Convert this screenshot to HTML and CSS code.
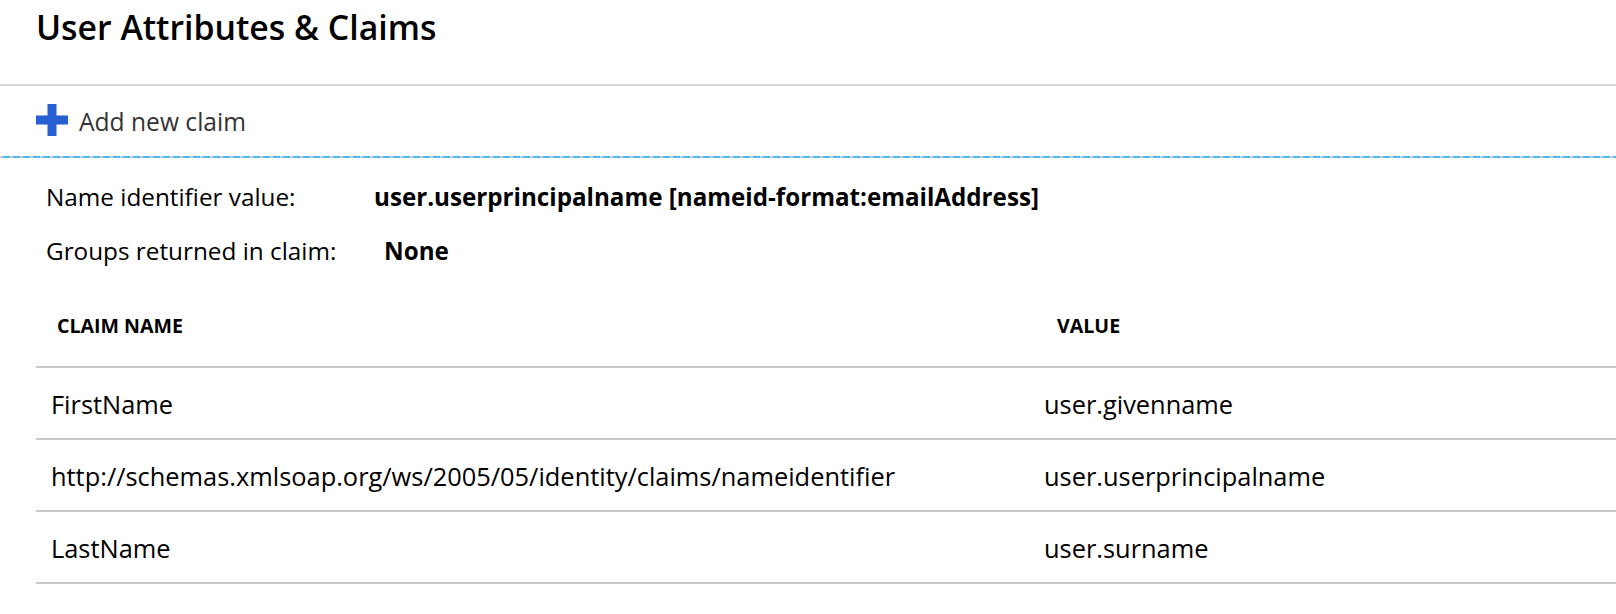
FILE: index.html
```html
<!DOCTYPE html>
<html lang="en">
<head>
<meta charset="utf-8">
<title>User Attributes &amp; Claims</title>
<link rel="stylesheet" href="styles.css">
</head>
<body>
<div class="page">
  <header class="page-header">
    <h1 class="title">User Attributes &amp; Claims</h1>
  </header>
  <div class="toolbar">
    <button class="add-btn" type="button">
      <svg class="plus-icon" width="32" height="32" viewBox="0 0 32 32" aria-hidden="true">
        <rect x="0" y="11.5" width="32" height="9" fill="#255fd2"/>
        <rect x="11.5" y="0" width="9" height="32" fill="#255fd2"/>
      </svg>
      <span class="add-label">Add new claim</span>
    </button>
  </div>
  <div class="dashed-rule"></div>
  <section class="info">
    <div class="info-row">
      <span class="info-label">Name identifier value:</span>
      <span class="info-value">user.userprincipalname [nameid-format:emailAddress]</span>
    </div>
    <div class="info-row">
      <span class="info-label">Groups returned in claim:</span>
      <span class="info-value info-value-offset">None</span>
    </div>
  </section>
  <div class="claims-table">
    <div class="th th-name">CLAIM NAME</div>
    <div class="th th-value">VALUE</div>
    <div class="td td-name">FirstName</div>
    <div class="td td-value">user.givenname</div>
    <div class="td td-name">http://schemas.xmlsoap.org/ws/2005/05/identity/claims/nameidentifier</div>
    <div class="td td-value">user.userprincipalname</div>
    <div class="td td-name">LastName</div>
    <div class="td td-value">user.surname</div>
  </div>
</div>
</body>
</html>
```
FILE: styles.css
```css
html, body {
  margin: 0;
  padding: 0;
  background: #ffffff;
}

body {
  font-family: "Open Sans", "Noto Sans", "Liberation Sans", sans-serif;
  color: #000000;
}

.page {
  width: 1616px;
}

.page-header {
  padding: 7px 0 37px 36px;
  border-bottom: 2px solid #d6d6d6;
}

.title {
  margin: 0;
  font-size: 33.8px;
  line-height: 40px;
  font-weight: 600;
  color: #000000;
}

.toolbar {
  height: 70px;
  box-sizing: border-box;
  padding: 18px 0 0 36px;
}

.add-btn {
  display: flex;
  align-items: flex-start;
  gap: 11px;
  margin: 0;
  padding: 0;
  border: 0;
  background: none;
  font: inherit;
  cursor: pointer;
}

.plus-icon {
  display: block;
  flex: none;
}

.add-label {
  margin-top: 2px;
  font-size: 24.6px;
  line-height: 32px;
  color: #333333;
}

.dashed-rule {
  height: 2px;
  background: repeating-linear-gradient(90deg, #cccccc 0 3px, #4cb9ee 3px 10px);
}

.info {
  display: flex;
  flex-direction: column;
  gap: 22px;
  padding: 23px 0 0 46px;
}

.info-row {
  display: flex;
  font-size: 24.3px;
  line-height: 32px;
}

.info-label {
  width: 328px;
  flex: none;
}

.info-value {
  font-weight: 700;
  font-size: 24.2px;
}

.info-value-offset {
  margin-left: 10px;
}

.claims-table {
  display: grid;
  grid-template-columns: 996px 1fr;
  margin-left: 36px;
  margin-top: 1px;
}

.th {
  padding: 46px 0 28px 21px;
  font-size: 19.6px;
  line-height: 24px;
  font-weight: 700;
  text-transform: uppercase;
  border-bottom: 2px solid #c8c8c8;
}

.th-value {
  padding-left: 25px;
}

.td {
  padding: 20px 0 18px 15px;
  font-size: 25.4px;
  line-height: 32px;
  border-bottom: 2px solid #c8c8c8;
  white-space: nowrap;
}

.td-value {
  padding-left: 12px;
}
```
